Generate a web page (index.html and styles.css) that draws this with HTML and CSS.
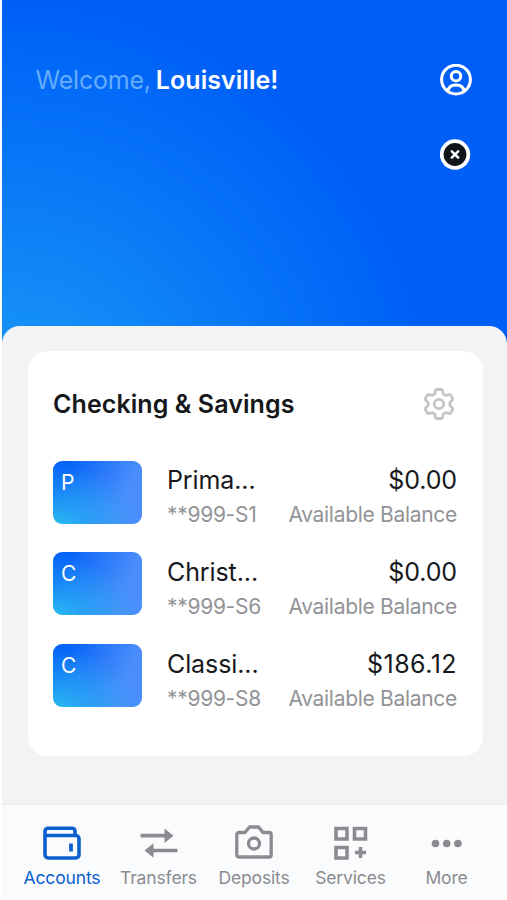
FILE: index.html
```html
<!DOCTYPE html>
<html lang="en">
<head>
<meta charset="utf-8">
<title>Accounts</title>
<link rel="stylesheet" href="styles.css">
</head>
<body>
<div class="app">
  <header class="hero">
    <h1 class="greeting"><span class="hello">Welcome,</span><span class="name">Louisville!</span></h1>
    <div class="actions">
      <svg class="profile" viewBox="0 0 32 32" fill="none" stroke="#fff" stroke-width="3"><circle cx="16" cy="15.600" r="14.400"/><circle cx="16" cy="12.200" r="4.700"/><path d="M8 27c.6-4.200 3.800-6 8-6s7.400 1.800 8 6"/></svg>
      <svg class="close" viewBox="0 0 31 31" fill="none"><circle cx="15" cy="15.500" r="15.200" fill="#fff"/><circle cx="15" cy="15.500" r="11.400" fill="#111418"/><path d="m11.800 12.300 6.400 6.400m0-6.400-6.400 6.400" stroke="#fff" stroke-width="2.400" stroke-linecap="round"/></svg>
    </div>
  </header>
  <main class="sheet">
    <section class="card">
      <div class="card-head">
        <h2 class="title">Checking &amp; Savings</h2>
        <svg class="gear" viewBox="0 0 30 32" fill="none" stroke="#c4c5c8" stroke-width="2.800" stroke-linejoin="round"><path d="M13 1.500h4q1.200 0 1.500 1.200l.5 2.300q.2 1 1.100 1.500l.9.500q.9.500 1.900.2l2.100-.7q1.100-.4 1.700.7l1.800 3.100q.6 1.100-.3 1.900l-1.600 1.500q-.8.700-.8 1.700v1.200q0 1 .8 1.700l1.600 1.500q.9.800.3 1.900l-1.800 3.100q-.6 1.100-1.700.7l-2.100-.7q-1-.3-1.900.2l-.9.500q-.9.500-1.100 1.500l-.5 2.300q-.3 1.200-1.500 1.200h-4q-1.200 0-1.500-1.200L11 27q-.2-1-1.100-1.500L9 25q-.9-.5-1.900-.2l-2.100.7q-1.100.4-1.700-.7l-1.800-3.100q-.6-1.100.3-1.900l1.600-1.500q.8-.7.800-1.700v-1.200q0-1-.8-1.700l-1.600-1.500q-.9-.8-.3-1.900l1.800-3.100q.6-1.100 1.700-.7l2.100.7q1 .3 1.900-.2l.9-.5q.9-.5 1.100-1.500l.5-2.300q.3-1.200 1.500-1.200z"/><circle cx="15" cy="16" r="4.700"/></svg>
      </div>
      <div class="accounts">
        <div class="account">
          <div class="tile">P</div>
          <div class="info"><div class="main">Prima...</div><div class="sub">**999-S1</div></div>
          <div class="balance"><div class="main">$0.00</div><div class="sub">Available Balance</div></div>
        </div>
        <div class="account">
          <div class="tile">C</div>
          <div class="info"><div class="main">Christ...</div><div class="sub">**999-S6</div></div>
          <div class="balance"><div class="main">$0.00</div><div class="sub">Available Balance</div></div>
        </div>
        <div class="account">
          <div class="tile">C</div>
          <div class="info"><div class="main">Classi...</div><div class="sub">**999-S8</div></div>
          <div class="balance"><div class="main wide">$186.12</div><div class="sub">Available Balance</div></div>
        </div>
      </div>
    </section>
  </main>
  <nav class="tabs">
    <a class="tab active"><svg viewBox="0 0 38 36" fill="none" stroke="currentColor" stroke-width="3.600" stroke-linejoin="round"><path d="M32 10.500V6a2.800 2.800 0 0 0-2.800-2.800H5.200A3.200 3.200 0 0 0 2 6.400V29.800a3.200 3.200 0 0 0 3.200 3.200H32.800a3.200 3.200 0 0 0 3.200-3.200V13.700a3.200 3.200 0 0 0-3.200-3.200H2"/><path d="M28 18.500v8" stroke-width="3.800"/></svg><span>Accounts</span></a>
    <a class="tab"><svg viewBox="0 0 38 36" fill="none" stroke="currentColor" stroke-width="3.700"><path d="M.5 10.700H27M11 25.500h26.500"/><path d="m24.500 3.500 9 7.200-9 7.200zM13.500 18.300l-9 7.200 9 7.200z" fill="currentColor" stroke="none"/></svg><span>Transfers</span></a>
    <a class="tab"><svg viewBox="0 0 38 36" fill="none" stroke="currentColor" stroke-width="3.300" stroke-linejoin="round"><path d="M3.800 7.500h6.200l4.500-5.500h9l4.500 5.500h6.200a2 2 0 0 1 2 2v20.500a2 2 0 0 1-2 2H3.800a2 2 0 0 1-2-2V9.500a2 2 0 0 1 2-2z"/><circle cx="19" cy="18.500" r="5.500"/></svg><span>Deposits</span></a>
    <a class="tab"><svg viewBox="0 0 38 36" fill="none" stroke="currentColor" stroke-width="3.600"><path d="M4 3.500h11v10.500H4zM22.500 3.500h11v10.500h-11zM4 22.500h11V33H4z"/><path d="M23 27.500h11M28.500 22v11"/></svg><span>Services</span></a>
    <a class="tab"><svg viewBox="0 0 38 36" fill="currentColor"><circle cx="7.500" cy="18.500" r="3.800"/><circle cx="18.700" cy="18.500" r="3.800"/><circle cx="29.900" cy="18.500" r="3.800"/></svg><span>More</span></a>
  </nav>
</div>
</body>
</html>
```
FILE: styles.css
```css
* { box-sizing: border-box; }
body { margin: 0; background: #fff; font-family: Inter, "Liberation Sans", sans-serif; }
.app { margin-left: 2px; height: 898px; display: flex; flex-direction: column; background: radial-gradient(circle 430px at 0 430px, #1a9ff6 0, #1590f7 24%, #0b7af7 57%, #0067f8 88%, #005ff6 100%); }
.hero { height: 326px; padding: 64px 35px 0 34px; display: flex; justify-content: space-between; }
.greeting { margin: 0; height: 32px; line-height: 32px; font-size: 25px; font-weight: 400; white-space: nowrap; display: flex; gap: 5px; }
.hello { color: #66adfd; font-weight: 400; letter-spacing: -.2px; margin-left: -.5px; }
.name { color: #fff; font-weight: 600; letter-spacing: .05px; }
.actions { display: flex; flex-direction: column; gap: 43px; }
.profile { width: 32px; height: 32px; }
.close { width: 31px; height: 31px; }
.sheet { height: 477px; background: #f2f3f5; border-radius: 18px 18px 0 0; padding: 25px 24px 0 26px; }
.card { height: 405px; background: #fff; border-radius: 20px; padding: 36px 26px 0 25px; }
.card-head { height: 34px; display: flex; align-items: center; justify-content: space-between; }
.title { margin: 0; color: #15171a; font-size: 25px; font-weight: 600; letter-spacing: .08px; white-space: nowrap; }
.gear { width: 30px; height: 32px; margin: -1px 3.500px 0 0; }
.accounts { margin-top: 39.500px; display: flex; flex-direction: column; gap: 28.800px; }
.account { height: 63px; display: flex; }
.tile { width: 88.500px; height: 63px; flex: none; border-radius: 9px; padding: 8px; color: #fff; font-size: 21px; line-height: 27px; background: radial-gradient(ellipse 100% 105% at 0 110%, #28c4f0 0, rgba(40,176,244,.75) 35%, rgba(40,150,250,0) 100%), linear-gradient(115deg, #0664f8 15%, #4b8dfb 75%); }
.info { margin-left: 25.500px; }
.balance { margin-left: auto; text-align: right; }
.main { color: #17191c; font-size: 25px; line-height: 38px; letter-spacing: -.1px; white-space: nowrap; }
.account + .account .main { padding-top: .5px; }
.wide { letter-spacing: .45px; }
.sub { color: #929396; font-size: 21px; line-height: 32px; letter-spacing: -.3px; white-space: nowrap; }
.tabs { height: 95px; flex: none; border-top: 2px solid #eeeff1; background: #fafbfd; display: grid; grid-template-columns: 98px 95px 96px 97px 95px; padding: 20px 0 0 11px; }
.tab { display: flex; flex-direction: column; align-items: center; color: #8b8c8f; }
.tab svg { width: 38px; height: 36px; }
.tab span { margin-top: 5px; font-size: 17.500px; line-height: 24px; letter-spacing: -.15px; white-space: nowrap; }
.active { color: #0b60cf; }
```
